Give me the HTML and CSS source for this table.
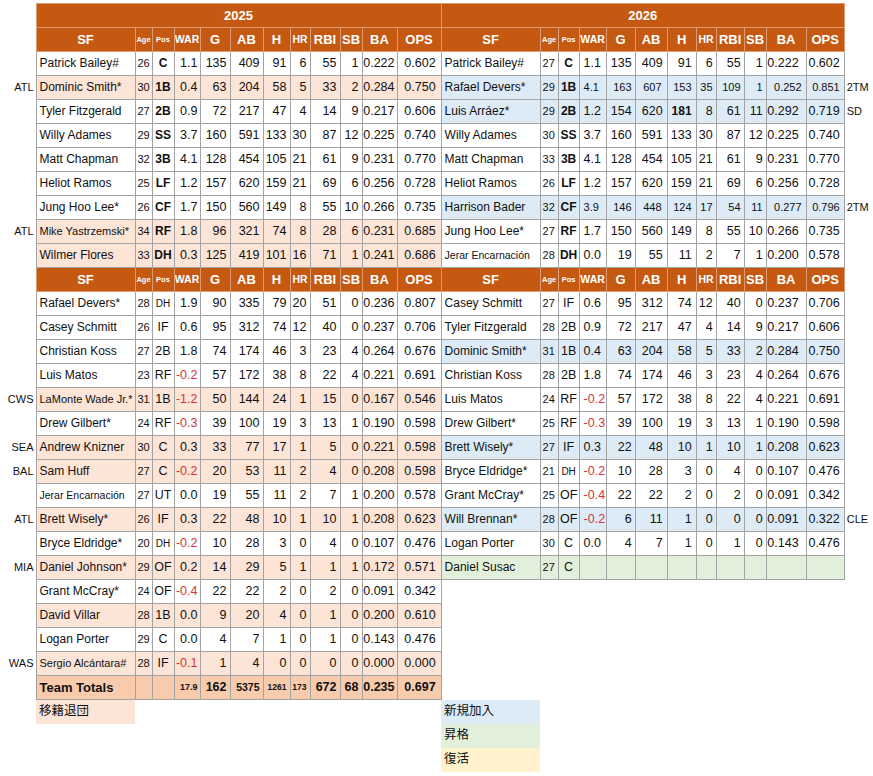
FILE: index.html
```html
<!DOCTYPE html>
<html lang="ja">
<head>
<meta charset="utf-8">
<title>SF 2025 / 2026</title>
<link rel="stylesheet" href="styles.css">
</head>
<body>
<table class="sheet">
<colgroup>
<col class="c-lab"><col class="c-name"><col class="c-age"><col class="c-pos"><col class="c-war"><col class="c-g"><col class="c-ab"><col class="c-h"><col class="c-hr"><col class="c-rbi"><col class="c-sb"><col class="c-ba"><col class="c-ops">
<col class="c-name"><col class="c-age2"><col class="c-pos2"><col class="c-war2"><col class="c-g2"><col class="c-ab2"><col class="c-h2"><col class="c-hr"><col class="c-rbi2"><col class="c-sb"><col class="c-ba2"><col class="c-ops2"><col class="c-rlab">
</colgroup>
<tbody>
<tr class="hy"><td></td><td colspan="12" class="h">2025</td><td colspan="12" class="h">2026</td><td></td></tr>
<tr class="hd"><td></td><td class="h">SF</td><td class="h hs">Age</td><td class="h hs">Pos</td><td class="h hm">WAR</td><td class="h">G</td><td class="h">AB</td><td class="h">H</td><td class="h hm">HR</td><td class="h">RBI</td><td class="h">SB</td><td class="h">BA</td><td class="h">OPS</td><td class="h">SF</td><td class="h hs">Age</td><td class="h hs">Pos</td><td class="h hm">WAR</td><td class="h">G</td><td class="h">AB</td><td class="h">H</td><td class="h hm">HR</td><td class="h">RBI</td><td class="h">SB</td><td class="h">BA</td><td class="h">OPS</td><td></td></tr>

<tr class="d"><td></td><td>Patrick Bailey#</td><td>26</td><td class="b">C</td><td>1.1</td><td>135</td><td>409</td><td>91</td><td>6</td><td>55</td><td>1</td><td>0.222</td><td>0.602</td><td>Patrick Bailey#</td><td>27</td><td class="b">C</td><td>1.1</td><td>135</td><td>409</td><td>91</td><td>6</td><td>55</td><td>1</td><td>0.222</td><td>0.602</td><td></td></tr>
<tr class="d lo rb"><td>ATL</td><td>Dominic Smith*</td><td>30</td><td class="b">1B</td><td>0.4</td><td>63</td><td>204</td><td>58</td><td>5</td><td>33</td><td>2</td><td>0.284</td><td>0.750</td><td>Rafael Devers*</td><td>29</td><td class="b">1B</td><td class="sm">4.1</td><td class="sm">163</td><td class="sm ab">607</td><td class="sm">153</td><td class="sm">35</td><td class="sm">109</td><td class="sm">1</td><td class="sm bq">0.252</td><td class="sm">0.851</td><td>2TM</td></tr>
<tr class="d rb"><td></td><td>Tyler Fitzgerald</td><td>27</td><td class="b">2B</td><td>0.9</td><td>72</td><td>217</td><td>47</td><td>4</td><td>14</td><td>9</td><td>0.217</td><td>0.606</td><td>Luis Arráez*</td><td>29</td><td class="b">2B</td><td>1.2</td><td>154</td><td>620</td><td class="b">181</td><td>8</td><td>61</td><td>11</td><td>0.292</td><td>0.719</td><td>SD</td></tr>
<tr class="d"><td></td><td>Willy Adames</td><td>29</td><td class="b">SS</td><td>3.7</td><td>160</td><td>591</td><td>133</td><td>30</td><td>87</td><td>12</td><td>0.225</td><td>0.740</td><td>Willy Adames</td><td>30</td><td class="b">SS</td><td>3.7</td><td>160</td><td>591</td><td>133</td><td>30</td><td>87</td><td>12</td><td>0.225</td><td>0.740</td><td></td></tr>
<tr class="d"><td></td><td>Matt Chapman</td><td>32</td><td class="b">3B</td><td>4.1</td><td>128</td><td>454</td><td>105</td><td>21</td><td>61</td><td>9</td><td>0.231</td><td>0.770</td><td>Matt Chapman</td><td>33</td><td class="b">3B</td><td>4.1</td><td>128</td><td>454</td><td>105</td><td>21</td><td>61</td><td>9</td><td>0.231</td><td>0.770</td><td></td></tr>
<tr class="d"><td></td><td>Heliot Ramos</td><td>25</td><td class="b">LF</td><td>1.2</td><td>157</td><td>620</td><td>159</td><td>21</td><td>69</td><td>6</td><td>0.256</td><td>0.728</td><td>Heliot Ramos</td><td>26</td><td class="b">LF</td><td>1.2</td><td>157</td><td>620</td><td>159</td><td>21</td><td>69</td><td>6</td><td>0.256</td><td>0.728</td><td></td></tr>
<tr class="d rb"><td></td><td>Jung Hoo Lee*</td><td>26</td><td class="b">CF</td><td>1.7</td><td>150</td><td>560</td><td>149</td><td>8</td><td>55</td><td>10</td><td>0.266</td><td>0.735</td><td>Harrison Bader</td><td>32</td><td class="b">CF</td><td class="sm">3.9</td><td class="sm">146</td><td class="sm ab">448</td><td class="sm">124</td><td class="sm">17</td><td class="sm">54</td><td class="sm">11</td><td class="sm bq">0.277</td><td class="sm">0.796</td><td>2TM</td></tr>
<tr class="d lo"><td>ATL</td><td class="sm">Mike Yastrzemski*</td><td>34</td><td class="b">RF</td><td>1.8</td><td>96</td><td>321</td><td>74</td><td>8</td><td>28</td><td>6</td><td>0.231</td><td>0.685</td><td>Jung Hoo Lee*</td><td>27</td><td class="b">RF</td><td>1.7</td><td>150</td><td>560</td><td>149</td><td>8</td><td>55</td><td>10</td><td>0.266</td><td>0.735</td><td></td></tr>
<tr class="d lo"><td></td><td>Wilmer Flores</td><td>33</td><td class="b">DH</td><td>0.3</td><td>125</td><td>419</td><td>101</td><td>16</td><td>71</td><td>1</td><td>0.241</td><td>0.686</td><td class="xs">Jerar Encarnación</td><td>28</td><td class="b">DH</td><td>0.0</td><td>19</td><td>55</td><td>11</td><td>2</td><td>7</td><td>1</td><td>0.200</td><td>0.578</td><td></td></tr>

<tr class="hd"><td></td><td class="h">SF</td><td class="h hs">Age</td><td class="h hs">Pos</td><td class="h hm">WAR</td><td class="h">G</td><td class="h">AB</td><td class="h">H</td><td class="h hm">HR</td><td class="h">RBI</td><td class="h">SB</td><td class="h">BA</td><td class="h">OPS</td><td class="h">SF</td><td class="h hs">Age</td><td class="h hs">Pos</td><td class="h hm">WAR</td><td class="h">G</td><td class="h">AB</td><td class="h">H</td><td class="h hm">HR</td><td class="h">RBI</td><td class="h">SB</td><td class="h">BA</td><td class="h">OPS</td><td></td></tr>

<tr class="d"><td></td><td>Rafael Devers*</td><td>28</td><td class="s10">DH</td><td>1.9</td><td>90</td><td>335</td><td>79</td><td>20</td><td>51</td><td>0</td><td>0.236</td><td>0.807</td><td>Casey Schmitt</td><td>27</td><td>IF</td><td>0.6</td><td>95</td><td>312</td><td>74</td><td>12</td><td>40</td><td>0</td><td>0.237</td><td>0.706</td><td></td></tr>
<tr class="d"><td></td><td>Casey Schmitt</td><td>26</td><td>IF</td><td>0.6</td><td>95</td><td>312</td><td>74</td><td>12</td><td>40</td><td>0</td><td>0.237</td><td>0.706</td><td>Tyler Fitzgerald</td><td>28</td><td>2B</td><td>0.9</td><td>72</td><td>217</td><td>47</td><td>4</td><td>14</td><td>9</td><td>0.217</td><td>0.606</td><td></td></tr>
<tr class="d rb"><td></td><td>Christian Koss</td><td>27</td><td>2B</td><td>1.8</td><td>74</td><td>174</td><td>46</td><td>3</td><td>23</td><td>4</td><td>0.264</td><td>0.676</td><td>Dominic Smith*</td><td>31</td><td>1B</td><td>0.4</td><td>63</td><td>204</td><td>58</td><td>5</td><td>33</td><td>2</td><td>0.284</td><td>0.750</td><td></td></tr>
<tr class="d"><td></td><td>Luis Matos</td><td>23</td><td>RF</td><td class="neg">-0.2</td><td>57</td><td>172</td><td>38</td><td>8</td><td>22</td><td>4</td><td>0.221</td><td>0.691</td><td>Christian Koss</td><td>28</td><td>2B</td><td>1.8</td><td>74</td><td>174</td><td>46</td><td>3</td><td>23</td><td>4</td><td>0.264</td><td>0.676</td><td></td></tr>
<tr class="d lo"><td>CWS</td><td class="sm">LaMonte Wade Jr.*</td><td>31</td><td>1B</td><td class="neg">-1.2</td><td>50</td><td>144</td><td>24</td><td>1</td><td>15</td><td>0</td><td>0.167</td><td>0.546</td><td>Luis Matos</td><td>24</td><td>RF</td><td class="neg">-0.2</td><td>57</td><td>172</td><td>38</td><td>8</td><td>22</td><td>4</td><td>0.221</td><td>0.691</td><td></td></tr>
<tr class="d"><td></td><td>Drew Gilbert*</td><td>24</td><td>RF</td><td class="neg">-0.3</td><td>39</td><td>100</td><td>19</td><td>3</td><td>13</td><td>1</td><td>0.190</td><td>0.598</td><td>Drew Gilbert*</td><td>25</td><td>RF</td><td class="neg">-0.3</td><td>39</td><td>100</td><td>19</td><td>3</td><td>13</td><td>1</td><td>0.190</td><td>0.598</td><td></td></tr>
<tr class="d lo rb"><td>SEA</td><td>Andrew Knizner</td><td>30</td><td>C</td><td>0.3</td><td>33</td><td>77</td><td>17</td><td>1</td><td>5</td><td>0</td><td>0.221</td><td>0.598</td><td>Brett Wisely*</td><td>27</td><td>IF</td><td>0.3</td><td>22</td><td>48</td><td>10</td><td>1</td><td>10</td><td>1</td><td>0.208</td><td>0.623</td><td></td></tr>
<tr class="d lo"><td>BAL</td><td>Sam Huff</td><td>27</td><td>C</td><td class="neg">-0.2</td><td>20</td><td>53</td><td>11</td><td>2</td><td>4</td><td>0</td><td>0.208</td><td>0.598</td><td>Bryce Eldridge*</td><td>21</td><td class="s10">DH</td><td class="neg">-0.2</td><td>10</td><td>28</td><td>3</td><td>0</td><td>4</td><td>0</td><td>0.107</td><td>0.476</td><td></td></tr>
<tr class="d"><td></td><td class="xs">Jerar Encarnación</td><td>27</td><td>UT</td><td>0.0</td><td>19</td><td>55</td><td>11</td><td>2</td><td>7</td><td>1</td><td>0.200</td><td>0.578</td><td>Grant McCray*</td><td>25</td><td>OF</td><td class="neg">-0.4</td><td>22</td><td>22</td><td>2</td><td>0</td><td>2</td><td>0</td><td>0.091</td><td>0.342</td><td></td></tr>
<tr class="d lo rb"><td>ATL</td><td>Brett Wisely*</td><td>26</td><td>IF</td><td>0.3</td><td>22</td><td>48</td><td>10</td><td>1</td><td>10</td><td>1</td><td>0.208</td><td>0.623</td><td>Will Brennan*</td><td>28</td><td>OF</td><td class="neg">-0.2</td><td>6</td><td>11</td><td>1</td><td>0</td><td>0</td><td>0</td><td>0.091</td><td>0.322</td><td>CLE</td></tr>
<tr class="d"><td></td><td>Bryce Eldridge*</td><td>20</td><td class="s10">DH</td><td class="neg">-0.2</td><td>10</td><td>28</td><td>3</td><td>0</td><td>4</td><td>0</td><td>0.107</td><td>0.476</td><td>Logan Porter</td><td>30</td><td>C</td><td>0.0</td><td>4</td><td>7</td><td>1</td><td>0</td><td>1</td><td>0</td><td>0.143</td><td>0.476</td><td></td></tr>
<tr class="d lo rg"><td>MIA</td><td>Daniel Johnson*</td><td>29</td><td>OF</td><td>0.2</td><td>14</td><td>29</td><td>5</td><td>1</td><td>1</td><td>1</td><td>0.172</td><td>0.571</td><td>Daniel Susac</td><td>27</td><td>C</td><td></td><td></td><td></td><td></td><td></td><td></td><td></td><td></td><td></td><td></td></tr>
<tr class="dl"><td></td><td>Grant McCray*</td><td>24</td><td>OF</td><td class="neg">-0.4</td><td>22</td><td>22</td><td>2</td><td>0</td><td>2</td><td>0</td><td>0.091</td><td>0.342</td><td colspan="13"></td></tr>
<tr class="dl lo"><td></td><td>David Villar</td><td>28</td><td>1B</td><td>0.0</td><td>9</td><td>20</td><td>4</td><td>0</td><td>1</td><td>0</td><td>0.200</td><td>0.610</td><td colspan="13"></td></tr>
<tr class="dl"><td></td><td>Logan Porter</td><td>29</td><td>C</td><td>0.0</td><td>4</td><td>7</td><td>1</td><td>0</td><td>1</td><td>0</td><td>0.143</td><td>0.476</td><td colspan="13"></td></tr>
<tr class="dl lo"><td>WAS</td><td class="sm">Sergio Alcántara#</td><td>28</td><td>IF</td><td class="neg">-0.1</td><td>1</td><td>4</td><td>0</td><td>0</td><td>0</td><td>0</td><td>0.000</td><td>0.000</td><td colspan="13"></td></tr>
<tr class="dl lt"><td></td><td class="tt">Team Totals</td><td></td><td></td><td class="t9">17.9</td><td>162</td><td class="t10">5375</td><td class="t8">1261</td><td class="t8">173</td><td>672</td><td>68</td><td>0.235</td><td>0.697</td><td colspan="13"></td></tr>

<tr class="lg"><td></td><td class="key ko">移籍退団</td><td colspan="11"></td><td class="key kb">新規加入</td><td colspan="12"></td></tr>
<tr class="lg"><td colspan="13"></td><td class="key kg">昇格</td><td colspan="12"></td></tr>
<tr class="lg"><td colspan="13"></td><td class="key ky">復活</td><td colspan="12"></td></tr>
</tbody>
</table>
</body>
</html>
```

FILE: styles.css
```css
html, body {
  margin: 0;
  padding: 0;
  background: #ffffff;
}

body {
  font-family: "Liberation Sans", Arial, "Noto Sans CJK JP", sans-serif;
  color: #111111;
}

.sheet {
  border-collapse: collapse;
  table-layout: fixed;
  width: 873px;
  margin-top: 3px;
  font-size: 12.5px;
}

.sheet tr {
  height: 24px;
}

.sheet td {
  padding: 0 3px 0 0;
  white-space: nowrap;
  overflow: hidden;
  text-align: right;
  line-height: 15px;
  vertical-align: middle;
}

/* column widths */
.c-lab { width: 36px; }
.c-name { width: 99px; }
.c-age { width: 17px; }
.c-pos { width: 22px; }
.c-war { width: 26px; }
.c-g { width: 30px; }
.c-ab { width: 33px; }
.c-h { width: 27px; }
.c-hr { width: 20px; }
.c-rbi { width: 30px; }
.c-sb { width: 22px; }
.c-ba { width: 35px; }
.c-ops { width: 44px; }
.c-age2 { width: 18px; }
.c-pos2 { width: 21px; }
.c-war2 { width: 27px; }
.c-g2 { width: 29px; }
.c-ab2 { width: 32px; }
.c-h2 { width: 29px; }
.c-rbi2 { width: 28px; }
.c-ba2 { width: 40px; }
.c-ops2 { width: 38px; }
.c-rlab { width: 29px; }

/* column alignment */
.sheet td:nth-child(1) {
  text-align: right;
  font-size: 11px;
  padding-right: 2px;
}
.sheet td:nth-child(2),
.sheet td:nth-child(14) {
  text-align: left;
  padding: 0 0 0 3px;
  font-size: 12px;
}
.sheet td:nth-child(3),
.sheet td:nth-child(15) {
  text-align: left;
  padding: 0 0 0 2px;
  font-size: 11px;
}
.sheet td:nth-child(4),
.sheet td:nth-child(16) {
  text-align: center;
  padding: 0;
}
.sheet td:nth-child(5) { padding-right: 2px; }
.sheet td:nth-child(17) {
  text-align: left;
  padding: 0 0 0 4px;
}
.sheet td:nth-child(12) { padding-right: 2px; }
.sheet td:nth-child(13) { padding-right: 5px; }
.sheet td:nth-child(19),
.sheet td:nth-child(20) { padding-right: 4px; }
.sheet td:nth-child(24) { padding-right: 7px; }
.sheet td:nth-child(25) { padding-right: 4px; }
.sheet td:nth-child(26) {
  text-align: left;
  font-size: 11px;
  padding: 0 0 0 2px;
}

/* grid lines */
.sheet tr.d td:nth-child(n+2):nth-child(-n+25),
.sheet tr.dl td:nth-child(n+2):nth-child(-n+13) {
  border: 1px solid #a3a3a3;
}

/* row fills */
.sheet tr.lo td:nth-child(n+2):nth-child(-n+13) { background: #fce4d6; }
.sheet tr.lt td:nth-child(n+2):nth-child(-n+13) { background: #f8cbad; font-weight: bold; }
.sheet tr.rb td:nth-child(n+14):nth-child(-n+25) { background: #ddebf7; }
.sheet tr.rg td:nth-child(n+14):nth-child(-n+25) { background: #e2efda; }

/* header */
.sheet td.h {
  background: #c65911;
  color: #ffffff;
  font-weight: bold;
  font-size: 13px;
  text-align: center;
  padding: 0;
  border: 1px solid #dc9b72;
}
.sheet td.hs { font-size: 7.5px; }
.sheet td.hm { font-size: 10.5px; }

/* cell variants */
.sheet td.b { font-weight: bold; font-size: 12px; }
.sheet td.neg { color: #d2343a; }
.sheet td.sm { font-size: 11px; }
.sheet td.xs { font-size: 10.5px; }
.sheet td.s10 { font-size: 10px; }
.sheet td.ab { padding-right: 5px; }
.sheet td.bq { padding-right: 4px; }
.sheet td.tt { font-size: 13px; }
.sheet td.t9 { font-size: 9px; }
.sheet td.t10 { font-size: 10.5px; }
.sheet td.t8 { font-size: 8.5px; }

/* legend */
.sheet td.key {
  text-align: left;
  padding: 0 0 0 3px;
  font-size: 12.5px;
  font-family: "Liberation Sans", "Noto Sans CJK JP", sans-serif;
}
.sheet td.ko { background: #fce4d6; }
.sheet td.kb { background: #ddebf7; }
.sheet td.kg { background: #e2efda; }
.sheet td.ky { background: #fff2cc; }
```
